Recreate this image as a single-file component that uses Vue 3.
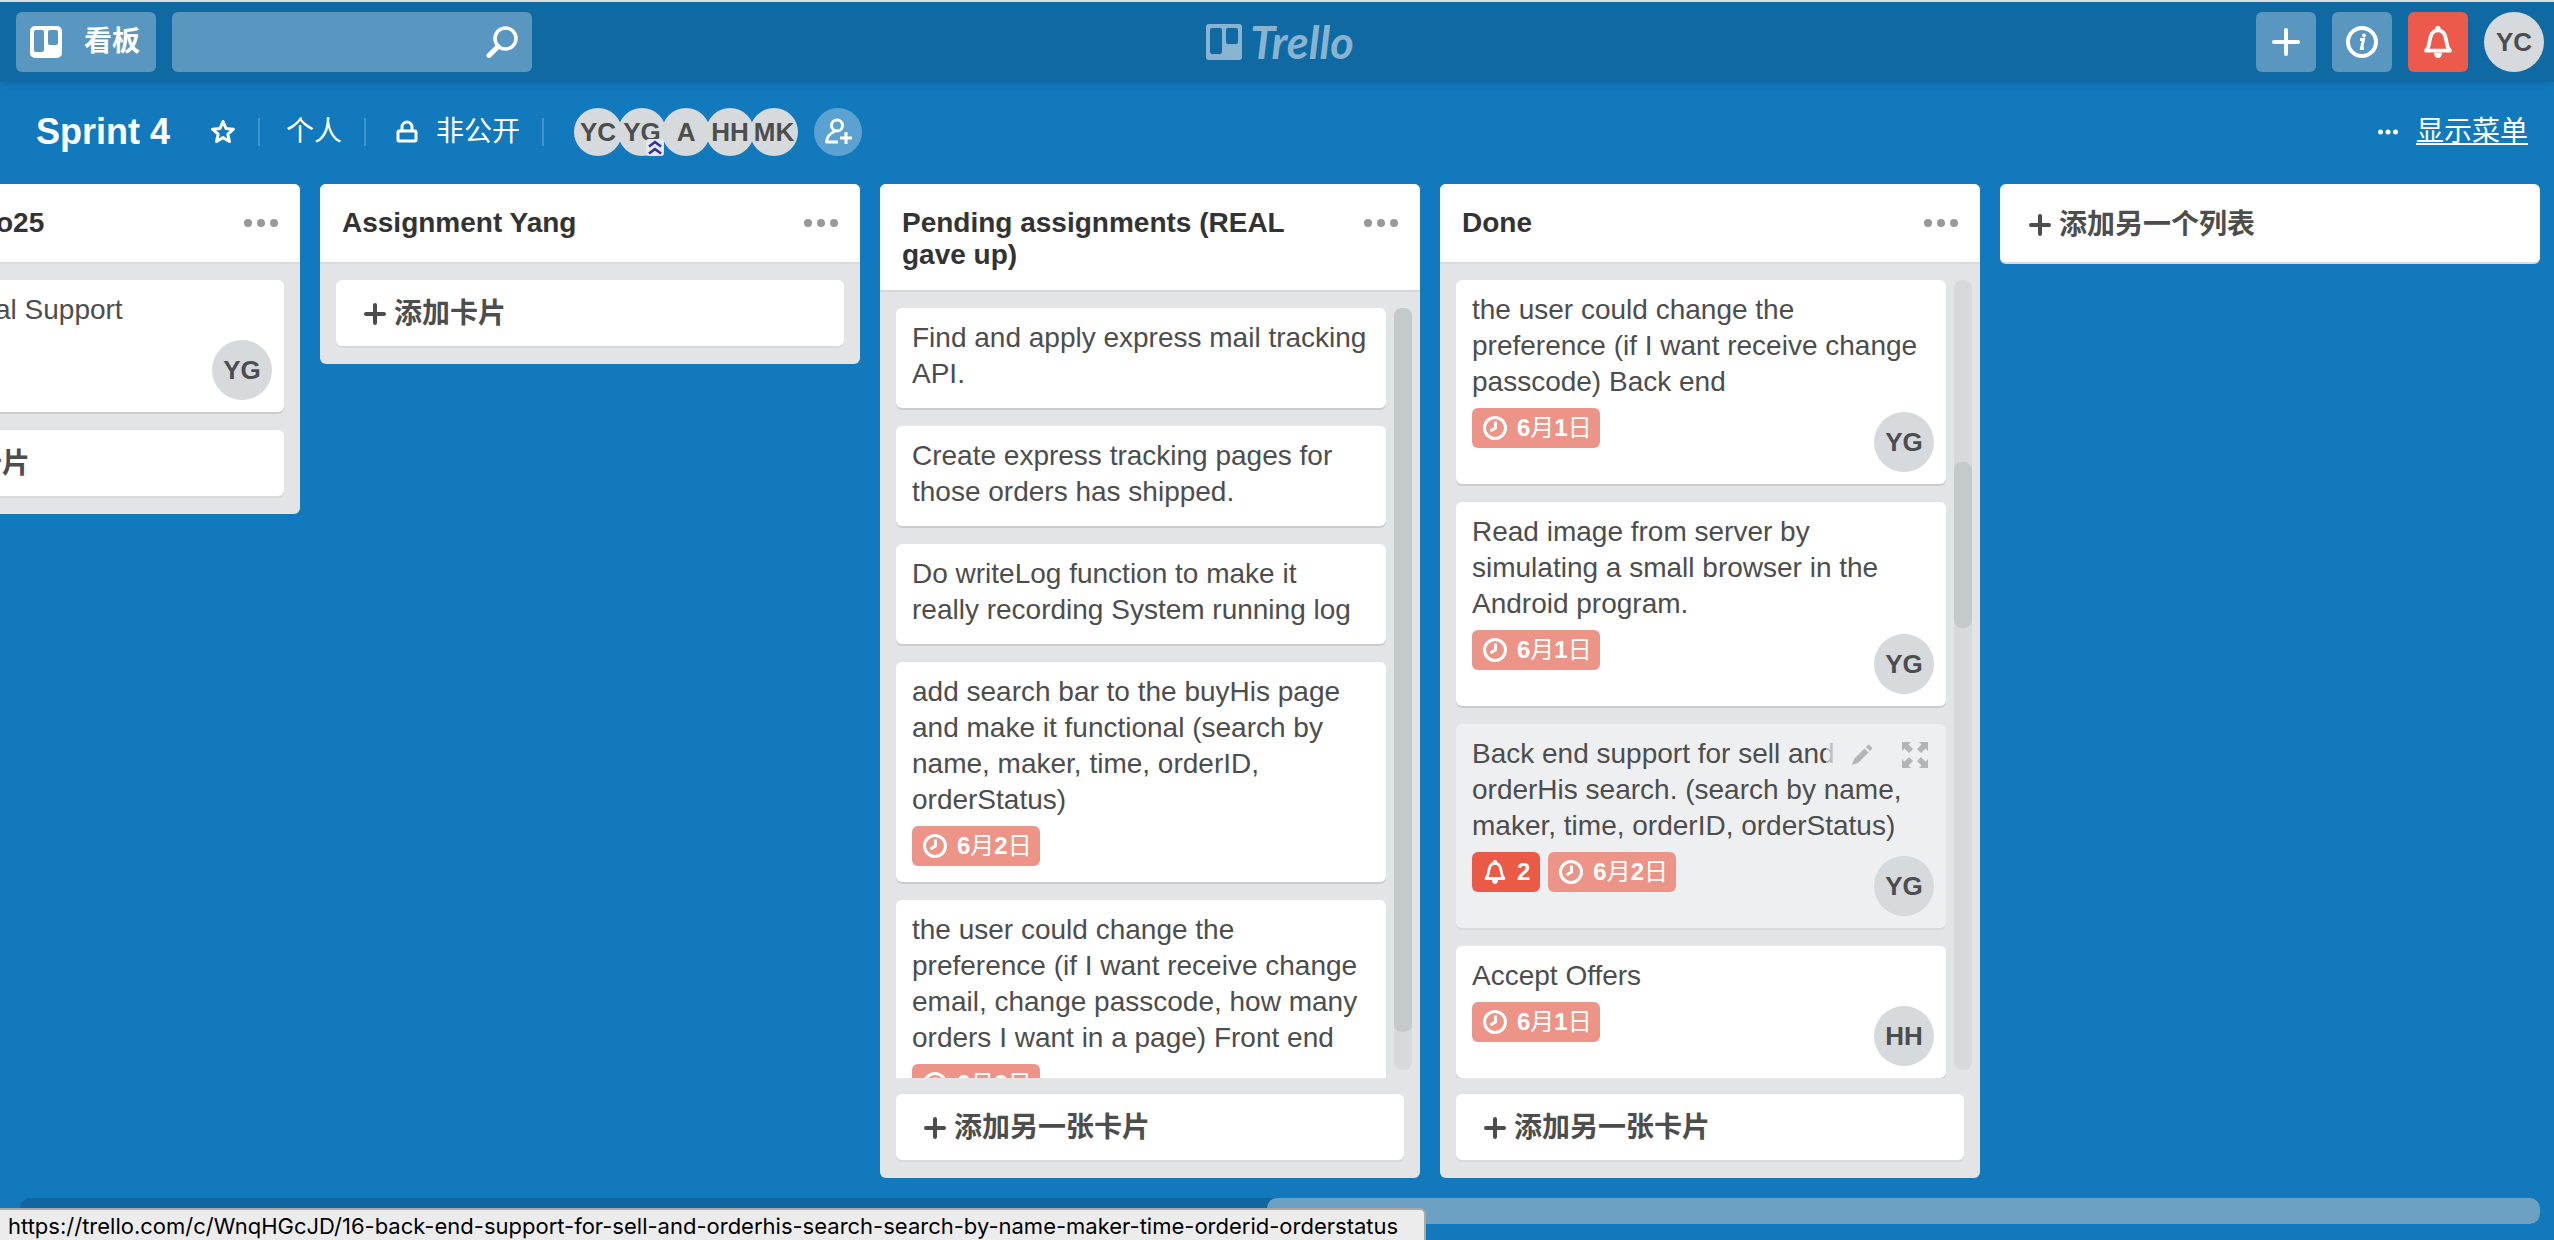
<script setup>
const members = [
  { initials: 'YC' },
  { initials: 'YG', admin: true },
  { initials: 'A' },
  { initials: 'HH' },
  { initials: 'MK' },
]

const lists = [
  {
    title: 'o25',
    clipped: true,
    cards: [{ text: 'al Support', member: 'YG' }],
    add: '添加另一张卡片',
  },
  { title: 'Assignment Yang', cards: [], add: '添加卡片' },
  {
    title: 'Pending assignments (REAL gave up)',
    scroll: { top: 0, size: 95 },
    cards: [
      { text: 'Find and apply express mail tracking API.' },
      { text: 'Create express tracking pages for those orders has shipped.' },
      { text: 'Do writeLog function to make it really recording System running log' },
      {
        text: 'add search bar to the buyHis page and make it functional (search by name, maker, time, orderID, orderStatus)',
        due: { month: 6, day: 2 },
      },
      {
        text: 'the user could change the preference (if I want receive change email, change passcode, how many orders I want in a page) Front end',
        due: { month: 6, day: 2 },
      },
    ],
    add: '添加另一张卡片',
  },
  {
    title: 'Done',
    scroll: { top: 23, size: 21 },
    cards: [
      {
        text: 'the user could change the preference (if I want receive change passcode) Back end',
        due: { month: 6, day: 1 },
        member: 'YG',
      },
      {
        text: 'Read image from server by simulating a small browser in the Android program.',
        due: { month: 6, day: 1 },
        member: 'YG',
      },
      {
        text: 'Back end support for sell and orderHis search. (search by name, maker, time, orderID, orderStatus)',
        due: { month: 6, day: 2 },
        alerts: 2,
        member: 'YG',
        active: true,
      },
      { text: 'Accept Offers', due: { month: 6, day: 1 }, member: 'HH' },
    ],
    add: '添加另一张卡片',
  },
]
</script>

<template>
  <div class="page">
    <header class="topbar">
      <div class="side">
        <button class="tile boards" type="button">
          <svg width="32" height="32" viewBox="0 0 32 32" aria-hidden="true">
            <path fill="#fff" fill-rule="evenodd" d="M5 0h22a5 5 0 0 1 5 5v22a5 5 0 0 1-5 5H5a5 5 0 0 1-5-5V5a5 5 0 0 1 5-5zM6 4a2 2 0 0 0-2 2v18a2 2 0 0 0 2 2h6a2 2 0 0 0 2-2V6a2 2 0 0 0-2-2zM20 4a2 2 0 0 0-2 2v11a2 2 0 0 0 2 2h6a2 2 0 0 0 2-2V6a2 2 0 0 0-2-2z" />
          </svg>
          <span>看板</span>
        </button>
        <div class="search">
          <input type="text" aria-label="Search" />
          <svg width="32" height="32" viewBox="0 0 32 32" fill="none" stroke="#fff" aria-hidden="true">
            <circle cx="19.500" cy="12.500" r="10.500" stroke-width="3.500" />
            <path d="M12 20.500 3 29.500" stroke-width="5" stroke-linecap="round" />
          </svg>
        </div>
      </div>

      <a class="logo" href="#">
        <svg width="36" height="36" viewBox="0 0 36 36" aria-hidden="true">
          <path fill="currentColor" fill-rule="evenodd" d="M3 0h30a3 3 0 0 1 3 3v30a3 3 0 0 1-3 3H3a3 3 0 0 1-3-3V3a3 3 0 0 1 3-3zM6 4a2 2 0 0 0-2 2v22a2 2 0 0 0 2 2h8a2 2 0 0 0 2-2V6a2 2 0 0 0-2-2zM22 4a2 2 0 0 0-2 2v12a2 2 0 0 0 2 2h8a2 2 0 0 0 2-2V6a2 2 0 0 0-2-2z" />
        </svg>
        <span>Trello</span>
      </a>

      <div class="side actions">
        <button class="tile" type="button" aria-label="Create">
          <svg width="32" height="32" viewBox="0 0 32 32" stroke="#fff" stroke-width="4" stroke-linecap="round" aria-hidden="true">
            <path d="M4 16h24M16 4v24" />
          </svg>
        </button>
        <button class="tile" type="button" aria-label="Info">
          <svg width="32" height="32" viewBox="0 0 32 32" fill="none" stroke="#fff" aria-hidden="true">
            <circle cx="16" cy="16" r="14" stroke-width="4" />
            <path d="M14 13.500h3.500l-2 9h2.500" stroke-width="3" />
            <circle cx="18" cy="9.500" r="2" fill="#fff" stroke="none" />
          </svg>
        </button>
        <button class="tile alert" type="button" aria-label="Notifications">
          <svg width="32" height="32" viewBox="0 0 24 24" aria-hidden="true">
            <path d="M3 18.500c3-3 2-6 3.500-10.500C7.300 5 9 3.300 12 3.300S16.700 5 17.500 8c1.500 4.500.5 7.500 3.500 10.500z" fill="none" stroke="#fff" stroke-width="2.800" stroke-linejoin="round" />
            <path d="M10 1.800a2 2 0 0 1 4 0v1.500h-4zM9 20h6c0 2.700-1.500 4-3 4s-3-1.300-3-4z" fill="#fff" />
          </svg>
        </button>
        <button class="avatar" type="button">YC</button>
      </div>
    </header>

    <section class="boardbar">
      <h1>Sprint 4</h1>
      <button class="star" type="button" aria-label="Star">
        <svg width="26" height="26" viewBox="0 0 26 26" aria-hidden="true">
          <path d="M13 2.500l3 7 7.500.700-5.700 5 1.700 7.300-6.500-3.900-6.500 3.900 1.700-7.300-5.700-5 7.500-.700z" fill="none" stroke="#fff" stroke-width="3" stroke-linejoin="round" />
        </svg>
      </button>
      <a class="scope" href="#">个人</a>
      <a class="privacy" href="#">
        <svg width="22" height="24" viewBox="0 0 22 24" fill="none" stroke="#fff" stroke-width="3" aria-hidden="true">
          <rect x="2" y="11" width="18" height="10" rx="1" />
          <path d="M6 11V7a5 5 0 0 1 10 0v4" />
        </svg>
        <span>非公开</span>
      </a>
      <div class="members">
        <button v-for="m in members" :key="m.initials" class="avatar small" type="button">
          {{ m.initials }}
          <svg v-if="m.admin" class="rank" width="18" height="17" viewBox="0 0 18 17" aria-hidden="true">
            <rect width="18" height="17" rx="3" fill="#e4e8ea" />
            <path d="M3 7.500 9 3l6 4.500M3 14.500 9 10l6 4.500" fill="none" stroke="#2f2fa2" stroke-width="2.500" />
          </svg>
        </button>
      </div>
      <button class="invite" type="button" aria-label="Add member">
        <svg width="28" height="28" viewBox="0 0 28 28" fill="none" stroke="#fff" stroke-width="3" aria-hidden="true">
          <circle cx="13" cy="7.500" r="5.500" />
          <path d="M10.500 13.500C5 16 3 18.500 2.500 24H14M22 14v12M16 20h12" stroke-linejoin="round" />
        </svg>
      </button>
      <div class="menu">
        <svg width="20" height="6" viewBox="0 0 20 6" fill="#fff" aria-hidden="true">
          <circle cx="2.500" cy="3" r="2.500" /><circle cx="10" cy="3" r="2.500" /><circle cx="17.500" cy="3" r="2.500" />
        </svg>
        <a href="#">显示菜单</a>
      </div>
    </section>

    <main class="canvas">
      <section v-for="list in lists" :key="list.title" class="list" :class="{ clipped: list.clipped }">
        <div class="list-head">
          <h2>{{ list.title }}</h2>
          <button type="button" aria-label="List actions">
            <svg width="34" height="8" viewBox="0 0 34 8" fill="#999" aria-hidden="true">
              <circle cx="4" cy="4" r="4" /><circle cx="17" cy="4" r="4" /><circle cx="30" cy="4" r="4" />
            </svg>
          </button>
        </div>
        <div v-if="list.cards.length" class="list-body">
          <div class="cards">
            <article v-for="card in list.cards" :key="card.text" class="card" :class="{ active: card.active }">
              <p>{{ card.text }}</p>
              <div v-if="card.due || card.member" class="card-foot">
                <div class="badges">
                  <span v-if="card.alerts" class="badge strong">
                    <svg width="24" height="24" viewBox="0 0 24 24" aria-hidden="true">
                      <path d="M3 18.500c3-3 2-6 3.500-10.500C7.300 5 9 3.300 12 3.300S16.700 5 17.500 8c1.500 4.500.5 7.500 3.500 10.500z" fill="none" stroke="#fff" stroke-width="2.800" stroke-linejoin="round" />
                      <path d="M10 1.800a2 2 0 0 1 4 0v1.500h-4zM9 20h6c0 2.700-1.500 4-3 4s-3-1.300-3-4z" fill="#fff" />
                    </svg>
                    <b>{{ card.alerts }}</b>
                  </span>
                  <span v-if="card.due" class="badge">
                    <svg width="24" height="24" viewBox="0 0 24 24" fill="none" stroke="#fff" stroke-width="3" aria-hidden="true">
                      <circle cx="12" cy="12" r="10.500" />
                      <path d="M12.500 5.500v6.500L7.500 15" />
                    </svg>
                    <span><b>{{ card.due.month }}</b>月<b>{{ card.due.day }}</b>日</span>
                  </span>
                </div>
                <span v-if="card.member" class="avatar">{{ card.member }}</span>
              </div>
              <div v-if="card.active" class="tools">
                <button type="button" aria-label="Edit card">
                  <svg width="24" height="24" viewBox="0 0 24 24" fill="#b3b6b8" aria-hidden="true">
                    <path d="M2 22l2-6L14.500 5.500l4 4L8 20zM16 4l2-2q1-.5 2 .5l1.500 1.500q1 1 .5 2l-2 2z" />
                  </svg>
                </button>
                <button type="button" aria-label="Open card">
                  <svg width="26" height="26" viewBox="0 0 26 26" fill="#b3b6b8" aria-hidden="true">
                    <path d="M0 0h9L6.500 2.500 11 7 7 11 2.500 6.500 0 9z" />
                    <path d="M26 0v9l-2.500-2.500L19 11l-4-4 4.500-4.500L17 0z" />
                    <path d="M0 26v-9l2.500 2.500L7 15l4 4-4.500 4.500L9 26z" />
                    <path d="M26 26h-9l2.500-2.500L15 19l4-4 4.500 4.500L26 17z" />
                  </svg>
                </button>
              </div>
            </article>
          </div>
          <div v-if="list.scroll" class="track">
            <div class="thumb" :style="{ top: list.scroll.top + '%', height: list.scroll.size + '%' }"></div>
          </div>
        </div>
        <button class="add-card" type="button">
          <svg width="22" height="22" viewBox="0 0 22 22" stroke="#4d4d4d" stroke-width="4" stroke-linecap="round" aria-hidden="true">
            <path d="M2 11h18M11 2v18" />
          </svg>
          <span>{{ list.add }}</span>
        </button>
      </section>

      <button class="add-list" type="button">
        <svg width="22" height="22" viewBox="0 0 22 22" stroke="#4d4d4d" stroke-width="4" stroke-linecap="round" aria-hidden="true">
          <path d="M2 11h18M11 2v18" />
        </svg>
        <span>添加另一个列表</span>
      </button>
    </main>

    <div class="hscroll"><div class="hthumb"></div></div>

    <div class="status">https://trello.com/c/WnqHGcJD/16-back-end-support-for-sell-and-orderhis-search-search-by-name-maker-time-orderid-orderstatus</div>
  </div>
</template>

<style>
body {
  margin: 0;
  overflow: hidden;
}
</style>

<style scoped>
* {
  box-sizing: border-box;
}
.page {
  display: flex;
  flex-direction: column;
  height: 100vh;
  overflow: hidden;
  background: #1279bd;
  font: 28px/36px "Liberation Sans", "Noto Sans CJK SC", sans-serif;
  color: #4d4d4d;
}
button {
  display: flex;
  align-items: center;
  padding: 0;
  border: 0;
  background: none;
  font: inherit;
  color: inherit;
}
svg {
  display: block;
  flex: none;
}
a {
  color: #fff;
  text-decoration: none;
}
h1,
h2,
p {
  margin: 0;
}

.topbar {
  display: flex;
  align-items: center;
  height: 82px;
  padding: 0 10px 0 16px;
  border-top: 2px solid #d9dde0;
  background: #0f69a3;
  box-shadow: 0 1px 8px rgba(0, 0, 0, 0.15);
}
.side {
  display: flex;
  flex: 1;
  gap: 16px;
}
.actions {
  justify-content: flex-end;
}
.tile {
  justify-content: center;
  width: 60px;
  height: 60px;
  border-radius: 6px;
  background: #5997c0;
}
.tile.alert {
  background: #eb5a4a;
}
.boards {
  justify-content: flex-start;
  gap: 22px;
  width: 140px;
  padding-left: 14px;
  font-weight: 700;
  color: #fff;
}
.search {
  display: flex;
  align-items: center;
  width: 360px;
  height: 60px;
  padding: 0 14px;
  border-radius: 6px;
  background: #5997c0;
}
.search input {
  flex: 1;
  min-width: 0;
  border: 0;
  background: none;
  font: inherit;
  color: #fff;
}
.logo {
  display: flex;
  align-items: center;
  gap: 8px;
  color: #88b4d1;
}
.logo span {
  font: italic 700 45px/40px "Lato", sans-serif;
}
.avatar {
  display: flex;
  align-items: center;
  justify-content: center;
  flex: none;
  width: 60px;
  height: 60px;
  border-radius: 50%;
  background: #d6dadc;
  font-weight: 700;
  font-size: 26px;
  color: #4d4d4d;
}

.boardbar {
  display: flex;
  align-items: center;
  height: 102px;
  padding: 0 26px 2px 36px;
  color: #fff;
}
h1 {
  font-size: 36px;
  line-height: 40px;
}
.star {
  padding: 0 22px 0 40px;
}
.scope,
.privacy,
.members {
  display: flex;
  align-items: center;
}
.scope::before,
.privacy::before,
.members::before {
  content: "";
  width: 2px;
  height: 28px;
  margin-right: 26px;
  background: #4194ca;
}
.scope,
.privacy {
  margin-right: 22px;
}
.privacy svg {
  margin: 0 18px 0 4px;
}
.members::before {
  margin-right: 30px;
}
.small {
  position: relative;
  width: 48px;
  height: 48px;
  margin-right: -4px;
}
.rank {
  position: absolute;
  right: 2px;
  bottom: 0;
}
.invite {
  justify-content: center;
  width: 48px;
  height: 48px;
  margin-left: 20px;
  border-radius: 50%;
  background: #5ba1d2;
}
.menu {
  display: flex;
  align-items: center;
  gap: 18px;
  margin-left: auto;
}
.menu a {
  text-decoration: underline;
  text-decoration-thickness: 2px;
  text-underline-offset: 2px;
}

.canvas {
  display: flex;
  flex: 1;
  align-items: flex-start;
  gap: 20px;
  min-height: 0;
  margin-left: -240px;
}
.list {
  display: flex;
  flex: none;
  flex-direction: column;
  width: 540px;
  max-height: 100%;
  padding-bottom: 18px;
  border-radius: 6px;
  background: #e2e4e6;
}
.list-head {
  display: flex;
  flex: none;
  align-items: flex-start;
  justify-content: space-between;
  min-height: 80px;
  margin-bottom: 16px;
  padding: 23px 22px 19px;
  border-bottom: 2px solid #d6dadc;
  border-radius: 6px 6px 0 0;
  background: #fff;
  color: #333;
}
.list-head h2 {
  max-width: 440px;
  font-size: 28px;
  line-height: 32px;
}
.list-head button {
  height: 32px;
}
/* the first column continues past the left edge of the window */
.clipped h2 {
  text-indent: 214px;
}
.clipped p {
  text-indent: 203px;
}
.list-body {
  display: flex;
  gap: 8px;
  min-height: 0;
  margin: 0 8px 16px 16px;
}
.cards {
  display: flex;
  flex: 1;
  flex-direction: column;
  gap: 18px;
  padding-bottom: 2px;
  overflow: hidden;
}
.clipped .list-body {
  margin-right: 16px;
}
.card {
  position: relative;
  flex: none;
  padding: 12px 12px 16px 16px;
  border-radius: 6px;
  background: #fff;
  box-shadow: 0 2px 0 #ccc;
}
.card p {
  margin-right: 6px;
}
.card.active {
  background: #edeff0;
  box-shadow: 0 2px 0 #d6dadc;
}
.card-foot {
  display: flex;
  align-items: flex-start;
  justify-content: space-between;
}
.badges {
  display: flex;
  gap: 8px;
  padding-top: 8px;
}
.badge {
  display: flex;
  align-items: center;
  gap: 10px;
  height: 40px;
  padding: 0 8px 0 11px;
  border-radius: 6px;
  background: #ec9488;
  font-size: 24px;
  color: #fff;
}
.badge.strong {
  padding-right: 10px;
  background: #eb5a46;
}
.card-foot .avatar {
  margin: 12px 0 -4px;
}
.tools {
  position: absolute;
  top: 12px;
  right: 12px;
  display: flex;
  gap: 28px;
  padding: 6px 6px 6px 24px;
  background: linear-gradient(90deg, rgba(237, 239, 240, 0.6), #edeff0 20px);
}
.track {
  flex: none;
  width: 18px;
  margin-bottom: 8px;
  border-radius: 8px;
  background: #d6dadc;
}
.thumb {
  position: relative;
  border-radius: 8px;
  background: #c4c9cc;
}
.add-card {
  flex: none;
  gap: 8px;
  height: 66px;
  margin: 0 16px;
  padding: 2px 0 0 28px;
  border-radius: 6px;
  background: #fff;
  box-shadow: 0 2px 0 #d6dadc;
  font-weight: 700;
}
.add-list {
  flex: none;
  gap: 8px;
  width: 540px;
  height: 80px;
  padding: 3px 0 0 29px;
  border-bottom: 2px solid #d6dadc;
  border-radius: 6px;
  background: #fff;
  font-weight: 700;
}

.hscroll {
  display: flex;
  justify-content: flex-end;
  flex: none;
  height: 26px;
  margin: 20px 14px 16px 20px;
  border-radius: 10px;
  background: #0f66a0;
}
.hthumb {
  width: 50.5%;
  border-radius: 10px;
  background: #6da1c4;
}
.status {
  position: fixed;
  bottom: 0;
  left: 0;
  height: 32px;
  padding: 0 26px 0 8px;
  border: 2px solid #a9a9a9;
  border-width: 2px 2px 0 0;
  border-radius: 0 6px 0 0;
  background: #ececec;
  font: 22px/32px "Inter", sans-serif;
  color: #000;
  white-space: nowrap;
}
</style>
